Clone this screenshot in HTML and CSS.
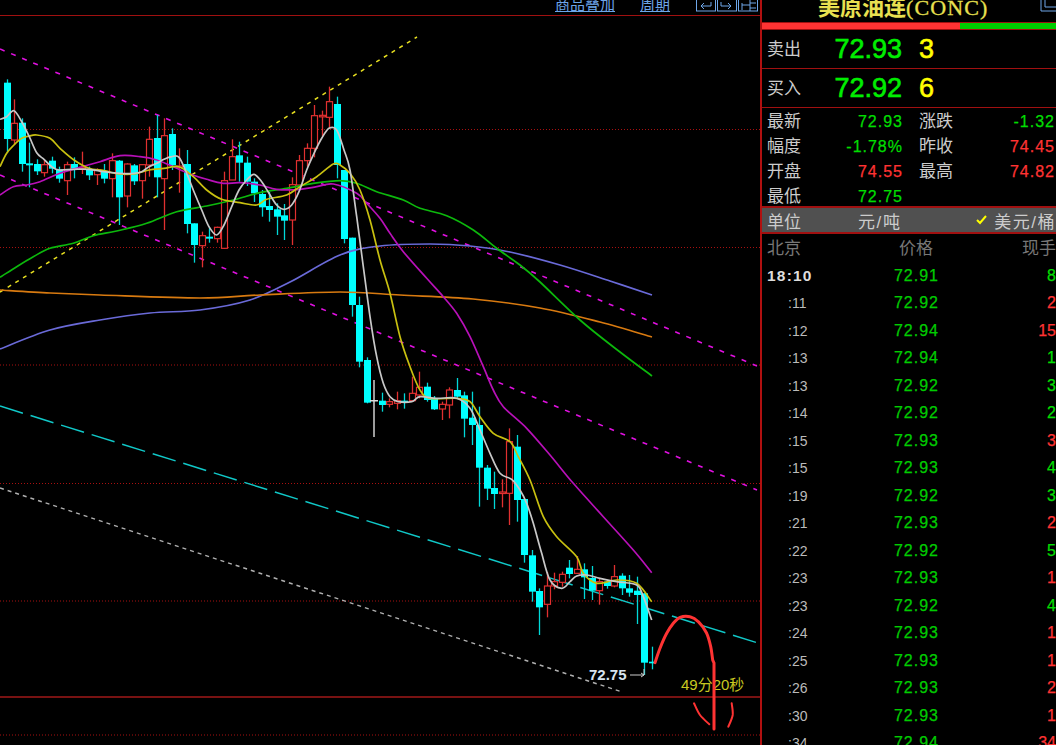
FILE: index.html
```html
<!DOCTYPE html>
<html lang="zh">
<head>
<meta charset="utf-8">
<title>美原油连</title>
<link rel="stylesheet" href="styles.css">
</head>
<body>
<div class="app">
  <section class="chart">
    <nav class="toolbar">
      <a class="link link-wide">商品叠加</a>
      <a class="link link-cycle">周期</a>
      <svg class="tool-icons" width="62" height="12" viewBox="0 0 62 12">
        <g fill="none" stroke="#6ea6e8" stroke-width="1">
          <rect x="0.5" y="-2" width="19" height="13"/>
          <path d="M15 2v4H5M8 3L5 6l3 3"/>
          <rect x="21.5" y="-2" width="19" height="13"/>
          <path d="M25 2v4h10M32 3l3 3-3 3"/>
          <rect x="42.5" y="-2" width="19" height="13"/>
          <path d="M46 3v7M46 5h8M54 3h6M54 8h6M54 0v11"/>
        </g>
      </svg>
    </nav>
    <svg id="chart" class="plot" width="760" height="729" viewBox="0 16 760 729"></svg>
  </section>
  <aside class="panel">
    <header class="title">
      <span class="title-text">美原油连<span class="title-code">(CONC)</span></span>
      <svg class="title-icon" width="16" height="12" viewBox="0 0 16 12"><path d="M1 -2V11H16M5 -2V7H16" fill="none" stroke="#6ea6e8"/></svg>
    </header>
    <div class="ratio"><span class="ratio-red"></span><span class="ratio-green"></span></div>
    <div class="quote quote-first">
      <span class="label">卖出</span><span class="big">72.93</span><span class="big-qty">3</span>
    </div>
    <div class="quote">
      <span class="label">买入</span><span class="big">72.92</span><span class="big-qty">6</span>
    </div>
    <div class="stats">
      <span class="label">最新</span><span class="val green">72.93</span><span class="label">涨跌</span><span class="val green">-1.32</span>
      <span class="label">幅度</span><span class="val green">-1.78%</span><span class="label">昨收</span><span class="val red">74.45</span>
      <span class="label">开盘</span><span class="val red">74.55</span><span class="label">最高</span><span class="val red">74.82</span>
      <span class="label">最低</span><span class="val green">72.75</span><span></span><span></span>
    </div>
    <div class="unit">
      <span class="unit-name">单位</span>
      <span class="unit-a">元/吨</span>
      <span class="unit-b"><svg class="check" width="11" height="10" viewBox="0 0 11 10"><path d="M1 5l3 3 6-7" fill="none" stroke="#ff0" stroke-width="2"/></svg>美元/桶</span>
    </div>
    <div class="tick tick-head"><span>北京</span><span>价格</span><span>现手</span></div>
    <div class="ticks">
      <div class="tick"><span class="t t-main">18:10</span><span class="p">72.91</span><span class="green">8</span></div>
      <div class="tick"><span class="t">:11</span><span class="p">72.92</span><span class="red">2</span></div>
      <div class="tick"><span class="t">:12</span><span class="p">72.94</span><span class="red">15</span></div>
      <div class="tick"><span class="t">:13</span><span class="p">72.94</span><span class="green">1</span></div>
      <div class="tick"><span class="t">:13</span><span class="p">72.92</span><span class="green">3</span></div>
      <div class="tick"><span class="t">:14</span><span class="p">72.92</span><span class="green">2</span></div>
      <div class="tick"><span class="t">:15</span><span class="p">72.93</span><span class="red">3</span></div>
      <div class="tick"><span class="t">:15</span><span class="p">72.93</span><span class="green">4</span></div>
      <div class="tick"><span class="t">:19</span><span class="p">72.92</span><span class="green">3</span></div>
      <div class="tick"><span class="t">:21</span><span class="p">72.93</span><span class="red">2</span></div>
      <div class="tick"><span class="t">:22</span><span class="p">72.92</span><span class="green">5</span></div>
      <div class="tick"><span class="t">:23</span><span class="p">72.93</span><span class="red">1</span></div>
      <div class="tick"><span class="t">:23</span><span class="p">72.92</span><span class="green">4</span></div>
      <div class="tick"><span class="t">:24</span><span class="p">72.93</span><span class="red">1</span></div>
      <div class="tick"><span class="t">:25</span><span class="p">72.93</span><span class="red">1</span></div>
      <div class="tick"><span class="t">:26</span><span class="p">72.93</span><span class="red">2</span></div>
      <div class="tick"><span class="t">:30</span><span class="p">72.93</span><span class="red">1</span></div>
      <div class="tick"><span class="t">:34</span><span class="p">72.94</span><span class="red">34</span></div>
    </div>
  </aside>
</div>
<script src="chart.js"></script>
</body>
</html>
```
FILE: styles.css
```css
* { box-sizing: border-box; }
html, body { margin: 0; height: 100%; background: #000; overflow: hidden; }
body { font-family: "Liberation Sans", "Noto Sans CJK SC", sans-serif; color: #ccc; }
.app { display: flex; width: 1056px; height: 745px; background: #000; }

.chart { width: 760px; flex: none; display: flex; flex-direction: column; }
.toolbar { height: 16px; flex: none; border-bottom: 1px solid #a01010; display: flex; align-items: flex-start; overflow: hidden; padding-left: 555px; }
.link { font-size: 15px; line-height: 15px; margin-top: -3px; color: #6ea6e8; text-decoration: underline; white-space: nowrap; }
.link-cycle { margin-left: 25px; }
.tool-icons { margin-left: 26px; flex: none; }
.plot { display: block; }
.chart-label { font-family: "Liberation Sans", "Noto Sans CJK SC", sans-serif; }
.low-label { font-size: 15px; font-weight: bold; fill: #d8e4ee; }
.timer-label { font-size: 15px; fill: #c8c820; }

.panel { width: 296px; flex: none; border-left: 2px solid #b01010; display: flex; flex-direction: column; overflow: hidden; }
.title { height: 22px; flex: none; position: relative; overflow: hidden; }
.title-text { position: absolute; left: 56px; top: -5px; font-family: "Liberation Serif", "Noto Sans CJK SC", serif; font-size: 22px; line-height: 26px; font-weight: bold; color: #e8e050; white-space: nowrap; }
.title-code { font-weight: normal; letter-spacing: 1.1px; -webkit-text-stroke: .3px #e8e050; }
.title-icon { position: absolute; right: 0; top: 0; }
.ratio { height: 8px; flex: none; display: flex; border-top: 1px solid #a01010; border-bottom: 1px solid #a01010; }
.ratio-red { width: 198px; background: #f33; }
.ratio-green { flex: 1; background: #0c0; }

.quote { height: 39px; flex: none; display: flex; align-items: center; padding-left: 5px; border-bottom: 1px solid #a01010; }
.label { font-size: 17px; line-height: 25px; color: #ccc; white-space: nowrap; }
.big { width: 101px; text-align: right; font-size: 27px; color: #0e0; -webkit-text-stroke: .6px #0e0; }
.big-qty { margin-left: 17px; font-size: 27px; color: #ff0; -webkit-text-stroke: .6px #ff0; }

.stats { flex: none; height: 100px; padding: 1px 1px 0 5px; display: grid; grid-template-columns: 35px 101px 16px 35px 1fr; grid-auto-rows: 25px; border-bottom: 2px solid #a01010; }
.stats .label:nth-child(4n+3) { grid-column: 4; }
.val { font-size: 16px; line-height: 25px; letter-spacing: 1px; text-align: right; -webkit-text-stroke: .25px currentColor; }
.stats .val:nth-child(4n+2) { grid-column: 2; }
.stats .val:nth-child(4n) { grid-column: 5; }
.green { color: #0d0; }
.red { color: #f33; }

.unit { height: 26px; flex: none; background: #505050; border-bottom: 2px solid #a01010; display: flex; align-items: center; padding-left: 5px; padding-right: 1px; font-size: 17px; color: #ccc; }
.unit-name { width: 91px; }
.unit-a { width: 70px; font-size: 17px; letter-spacing: 1.6px; white-space: nowrap; }
.unit-b { margin-left: auto; display: flex; align-items: center; white-space: nowrap; letter-spacing: 1.5px; margin-right: -1px; }
.check { margin-right: 7px; }

.tick { height: 27.5px; display: grid; grid-template-columns: 1fr 1fr 1fr; align-items: center; padding-left: 5px; font-size: 15px; }
.tick span:nth-child(3) { text-align: right; font-size: 16px; -webkit-text-stroke: .25px currentColor; }
.tick-head { height: 32px; margin-bottom: 3px; color: #777; font-size: 17px; }
.tick-head span:nth-child(2) { text-align: center; padding-left: 9px; }
.tick-head span:nth-child(3) { font-size: 17px; color: #777; -webkit-text-stroke: 0; }
.t { padding-left: 21px; color: #bbb; font-size: 14px; }
.t-main { padding-left: 0; color: #ddd; font-weight: bold; font-size: 15.5px; letter-spacing: 1.2px; }
.p { color: #0c0; text-align: center; padding-left: 10px; font-size: 16px; letter-spacing: 1px; -webkit-text-stroke: .25px #0c0; }
```
FILE: chart.js
```js
var NS = 'http://www.w3.org/2000/svg';
var svg = document.getElementById('chart');

function el(name, attrs, text) {
  var n = document.createElementNS(NS, name);
  for (var k in attrs) n.setAttribute(k, attrs[k]);
  if (text) n.textContent = text;
  svg.appendChild(n);
  return n;
}

/* Convert points read off a 3x crop back to page coordinates */
function from(ox, oy, pts) {
  return pts.map(function (p) { return [ox + p[0] / 3, oy + p[1] / 3]; });
}

function smooth(pts) {
  var d = 'M' + pts[0][0].toFixed(1) + ' ' + pts[0][1].toFixed(1);
  for (var i = 0; i < pts.length - 1; i++) {
    var a = pts[i - 1] || pts[i], b = pts[i], c = pts[i + 1], e = pts[i + 2] || c;
    d += 'C' + (b[0] + (c[0] - a[0]) / 6).toFixed(1) + ' ' + (b[1] + (c[1] - a[1]) / 6).toFixed(1) + ' ' +
      (c[0] - (e[0] - b[0]) / 6).toFixed(1) + ' ' + (c[1] - (e[1] - b[1]) / 6).toFixed(1) + ' ' +
      c[0].toFixed(1) + ' ' + c[1].toFixed(1);
  }
  return d;
}

/* Grid */
[129.5, 247.5, 365, 483.5, 601, 735].forEach(function (y) {
  el('line', { x1: 0, x2: 760, y1: y, y2: y, stroke: '#a81010', 'stroke-width': 1, 'stroke-dasharray': '1 2' });
});
el('line', { x1: 0, x2: 760, y1: 697, y2: 697, stroke: '#a01818', 'stroke-width': 1.4 });

/* Trend channels */
[
  [0, 49, 757, 366, '#e010e0', '5 7', 1.6],
  [0, 175, 757, 490, '#e010e0', '5 7', 1.6],
  [0, 292, 417, 37, '#e8e020', '4 5', 1.5],
  [0, 406, 758, 643, '#10c8c8', '24 8', 1.5],
  [0, 488, 622, 692, '#b0b0b0', '4 4', 1.4]
].forEach(function (l) {
  el('line', { x1: l[0], y1: l[1], x2: l[2], y2: l[3], stroke: l[4], 'stroke-dasharray': l[5], 'stroke-width': l[6] });
});

/* Candles: high, top, bottom, low read off the 3x crops; c = cyan, r = red */
function z3(i, h, t, b, l, c) { return { i: i, ys: [h, t, b, l].map(function (v) { return 70 + v / 3; }), c: c }; }
function z4(i, h, t, b, l, c) { return { i: i, ys: [h, t, b, l].map(function (v) { return 150 + v / 3; }), c: c }; }
function z5(i, h, t, b, l, c) { return { i: i, ys: [h, t, b, l].map(function (v) { return 400 + v / 3; }), c: c }; }

var candles = [
  z3(0,28,38,207,248,'c'),z3(1,88,160,210,222,'r'),z3(2,145,158,282,305,'c'),z3(3,218,280,286,352,'c'),
  z3(4,268,282,304,315,'c'),z3(5,270,284,308,320,'r'),z3(6,260,272,296,310,'c'),z3(7,290,298,326,338,'c'),
  z3(8,275,284,332,375,'r'),z3(9,262,282,296,325,'c'),z3(10,245,292,296,312,'r'),z3(11,290,300,316,330,'c'),
  z3(12,295,300,314,345,'r'),z3(13,282,304,326,340,'c'),z3(14,250,272,326,382,'r'),z3(15,270,272,382,465,'c'),
  z3(16,280,282,378,412,'r'),z3(17,282,286,334,345,'c'),z3(18,282,284,332,386,'r'),z3(19,170,208,285,320,'r'),
  z3(20,135,204,322,382,'c'),z3(21,145,197,326,480,'r'),z3(22,175,192,286,300,'c'),z3(23,235,288,290,368,'r'),
  z3(24,240,282,462,490,'c'),z3(25,460,460,525,578,'c'),z3(26,485,497,527,592,'r'),z3(27,472,500,506,518,'c'),
  z3(28,470,472,506,518,'r'),z3(29,305,332,535,537,'r'),z3(30,208,260,330,330,'r'),z3(31,215,256,278,335,'c'),
  z3(32,260,278,335,348,'c'),z3(33,325,335,370,396,'c'),z3(34,360,372,412,440,'c'),z3(35,365,408,420,455,'c'),
  z3(36,400,418,440,495,'c'),z3(37,402,436,452,510,'c'),z3(38,322,344,450,525,'r'),z3(39,255,272,345,345,'r'),
  z3(40,220,235,272,290,'r'),z3(41,105,137,235,262,'r'),z3(42,122,136,138,200,'r'),z3(43,50,95,142,175,'r'),
  z3(44,80,102,285,325,'c'),
  z4(45,60,60,267,280,'c'),z4(46,263,263,465,500,'c'),z4(47,440,465,635,652,'c'),z4(48,622,630,758,760,'c'),
  z4(50,728,752,765,785,'c'),z4(51,745,755,763,772,'r'),z4(52,725,752,760,778,'r'),z4(53,730,752,756,776,'c'),
  z4(54,680,730,752,752,'r'),z4(55,665,712,735,745,'r'),z4(56,698,710,750,755,'c'),z4(57,738,745,778,780,'c'),
  z4(58,755,763,777,810,'r'),z4(59,712,720,765,805,'r'),z4(60,684,720,740,745,'c'),z4(61,725,736,806,862,'c'),
  z4(62,725,803,825,885,'c'),
  z5(63,20,75,203,320,'c'),z5(64,195,203,266,300,'c'),z5(65,215,264,282,327,'c'),z5(66,238,276,280,322,'r'),
  z5(67,85,125,280,375,'r'),z5(68,105,140,300,365,'c'),z5(69,297,297,465,488,'c'),z5(70,450,466,575,605,'c'),
  z5(71,565,573,622,705,'c'),z5(72,516,558,613,652,'r'),z5(73,518,545,558,568,'r'),z5(74,515,523,547,560,'r'),
  z5(75,480,503,522,535,'c'),z5(76,468,508,520,520,'r'),z5(77,490,508,532,597,'c'),z5(78,498,534,572,600,'c'),
  z5(79,535,545,572,614,'r'),z5(80,540,545,558,566,'c'),z5(81,495,530,558,562,'r'),z5(82,520,527,565,585,'c'),
  z5(83,525,565,578,590,'c'),z5(84,530,572,585,672,'c'),z5(85,580,580,788,825,'c'),z5(86,740,785,790,808,'c')
];

candles.forEach(function (k) {
  var x = Math.round(6.67 + 7.5 * k.i) + 0.5;
  var col = k.c === 'c' ? '#00ffff' : '#e03030';
  var wick = k.c === 'c' ? '#00d8d8' : '#e03030';
  el('line', { x1: x, x2: x, y1: k.ys[0], y2: k.ys[3], stroke: wick, 'stroke-width': 1.3 });
  if (k.c === 'c') {
    el('rect', { x: x - 3.5, y: k.ys[1], width: 7, height: Math.max(k.ys[2] - k.ys[1], 1.5), fill: col });
  } else {
    el('rect', { x: x - 3, y: k.ys[1], width: 6, height: Math.max(k.ys[2] - k.ys[1], 1.5), fill: '#000', stroke: col, 'stroke-width': 1.2 });
  }
});
/* White doji */
el('path', { d: 'M374 380V437M370 400.7H378', stroke: '#ddd', 'stroke-width': 1.4, fill: 'none' });

/* Moving averages */
var blue = [[0,349],[50,330],[100,320],[150,313],[200,310],[250,300],[290,282],[340,255],[380,246],[430,244],[470,246],[510,252],[560,265],[610,281],[652,295]];
var orange = [[0,290],[50,293],[100,295],[200,298],[260,295],[340,292],[400,295],[473,299],[540,308],[600,322],[652,337]];
var green = from(0,70,[[0,622],[50,590],[100,560],[150,535],[220,520],[280,497],[350,483],[440,460],[530,425],[620,408],[700,390],[780,368],[860,355],[940,340],[1020,332]])
  .concat(from(340,150,[[50,100],[110,125],[190,150],[240,175],[320,197],[400,240],[470,295],[540,345]]))
  .concat([[540,282],[580,320],[620,352],[652,376]]);
var magenta = from(0,70,[[0,375],[40,350],[80,345],[120,335],[180,310],[240,292],[300,275],[360,257],[420,260],[470,270],[520,290],[570,312],[620,328],[670,340],[720,338],[780,345],[830,358],[900,358],[950,350],[1000,342]])
  .concat(from(340,150,[[50,130],[80,160],[120,205],[150,250],[190,305],[260,385],[310,440],[350,490],[390,560],[430,650],[460,720],[490,770]]))
  .concat(from(460,400,[[200,85],[270,165],[340,250],[430,350],[520,450],[575,518]]));
var yellow = from(0,70,[[0,290],[20,250],[42,225],[65,205],[88,198],[110,195],[150,205],[180,235],[222,270],[267,295],[312,302],[358,312],[402,312],[447,300],[492,295],[537,290],[580,320],[620,360],[665,388],[720,398],[770,405],[800,388],[860,375],[900,350],[950,320],[1000,282]])
  .concat(from(340,150,[[0,45],[30,70],[60,120],[90,210],[120,330],[150,430],[180,560],[210,650],[240,720],[270,745],[350,745]]))
  .concat(from(460,400,[[30,5],[60,50],[100,100],[150,125],[175,170],[210,240],[250,350],[290,410],[350,470],[370,520],[410,550],[470,540],[530,550],[575,605]]));
var white = from(0,70,[[0,148],[20,140],[42,122],[65,155],[88,200],[110,248],[132,268],[155,290],[177,300],[222,298],[267,298],[312,305],[358,310],[402,310],[425,305],[447,290],[470,280],[492,268],[515,260],[537,262],[560,310],[582,365],[605,420],[627,470],[650,495],[672,465],[695,410],[717,360],[740,330],[762,313],[785,335],[807,370],[830,405],[852,418],[875,405],[897,365],[920,300],[942,250],[965,205],[987,175],[1010,180]])
  .concat(from(340,150,[[12,0],[30,60],[50,200],[70,350],[90,500],[110,620],[130,700],[150,740],[175,755],[215,755],[240,740],[290,745],[350,745]]))
  .concat(from(460,400,[[30,25],[60,90],[90,160],[120,220],[155,238],[180,270],[200,310],[220,370],[245,460],[270,540],[305,565],[330,545],[350,528],[380,525],[420,535],[470,545],[530,555],[550,590],[575,660]]));

[[blue,'#6a6ad8'],[orange,'#d87a10'],[green,'#0cb80c'],[magenta,'#b810b8'],[yellow,'#c8c010'],[white,'#c8c8c8']].forEach(function (m) {
  el('path', { d: smooth(m[0]), fill: 'none', stroke: m[1], 'stroke-width': 1.7 });
});

/* Labels */
el('text', { x: 589, y: 680, 'class': 'chart-label low-label' }, '72.75');
el('path', { d: 'M630 675H644M641 673l3 2-3 2M644 669V675', stroke: '#ccc', fill: 'none', 'stroke-width': 1 });
el('text', { x: 681, y: 690, 'class': 'chart-label timer-label' }, '49分20秒');

/* Hand-drawn annotation */
el('path', { d: smooth(from(460,400,[[585,788],[600,745],[620,700],[640,670],[660,652],[690,650],[715,665],[740,700],[752,740],[758,780]])) + 'L714 663L714 729', fill: 'none', stroke: '#f33', 'stroke-width': 3, 'stroke-linecap': 'round' });
el('path', { d: smooth(from(460,400,[[702,910],[720,945],[748,973]])), fill: 'none', stroke: '#f33', 'stroke-width': 2, 'stroke-linecap': 'round' });
el('path', { d: smooth(from(460,400,[[815,910],[818,945],[805,980]])), fill: 'none', stroke: '#f33', 'stroke-width': 2, 'stroke-linecap': 'round' });
```
